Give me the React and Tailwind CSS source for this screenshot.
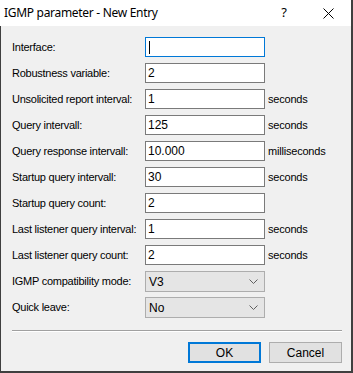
import React from "react";

const rows = [
  { label: "Interface:", value: "", unit: "", focus: true },
  { label: "Robustness variable:", value: "2", unit: "" },
  { label: "Unsolicited report interval:", value: "1", unit: "seconds" },
  { label: "Query intervall:", value: "125", unit: "seconds" },
  { label: "Query response intervall:", value: "10.000", unit: "milliseconds" },
  { label: "Startup query intervall:", value: "30", unit: "seconds" },
  { label: "Startup query count:", value: "2", unit: "" },
  { label: "Last listener query interval:", value: "1", unit: "seconds" },
  { label: "Last listener query count:", value: "2", unit: "seconds" },
];

const selects = [
  { label: "IGMP compatibility mode:", value: "V3" },
  { label: "Quick leave:", value: "No" },
];

function Chevron() {
  return (
    <svg width="9" height="6" viewBox="0 0 9 6" className="shrink-0">
      <path d="M0.5 0.5 L4.5 4.5 L8.5 0.5" fill="none" stroke="#606060" strokeWidth="1" />
    </svg>
  );
}

export default function App() {
  return (
    <div
      className="w-[353px] h-[373px] bg-[#f0f0f0] flex flex-col border-l border-r-2 border-b-2 border-[#3f3f3f] text-black"
      style={{ fontFamily: '"Liberation Sans", Arial, sans-serif' }}
    >
      <div className="h-[26px] bg-white flex items-center shrink-0 -ml-px">
        <div
          className="pl-[4px] text-[12px] flex-1 tracking-[-0.3px]"
          style={{ fontFamily: '"Noto Sans", "Open Sans", sans-serif' }}
        >
          IGMP parameter - New Entry
        </div>
        <div
          className="w-[46px] text-center text-[13px] mr-[-2px]"
          style={{ fontFamily: '"Noto Sans", sans-serif' }}
        >
          ?
        </div>
        <div className="w-[46px] flex justify-center">
          <svg width="11" height="11" viewBox="0 0 11 11">
            <path d="M0.5 0.5 L10.5 10.5 M10.5 0.5 L0.5 10.5" stroke="#000" strokeWidth="1" />
          </svg>
        </div>
      </div>

      <div className="flex flex-col pt-[11px] pl-[11px] gap-[6px] text-[11px]">
        {rows.map((r, i) => (
          <div key={i} className="flex items-center h-[20px]">
            <div className="w-[133px] shrink-0 tracking-[-0.25px]">{r.label}</div>
            <div
              className={`w-[120px] h-[20px] bg-white border flex items-center pl-[2px] text-[12px] ${
                r.focus ? "border-[#0078d7]" : "border-[#7a7a7a]"
              }`}
            >
              {r.focus ? <div className="w-px h-[13px] bg-black ml-[1px]" /> : r.value}
            </div>
            {r.unit && <div className="pl-[3px] tracking-[-0.2px]">{r.unit}</div>}
          </div>
        ))}
      </div>

      <div className="flex flex-col pt-[6px] pl-[11px] gap-[5px] text-[11px]">
        {selects.map((s, i) => (
          <div key={i} className="flex items-center h-[21px]">
            <div className="w-[133px] shrink-0 tracking-[-0.25px]">{s.label}</div>
            <div className="w-[120px] h-[21px] bg-[#e5e5e5] border border-[#adadad] flex items-center pl-[3px] pr-[6px] text-[12px]">
              <span className="flex-1">{s.value}</span>
              <Chevron />
            </div>
          </div>
        ))}
      </div>

      <div className="mt-[12px] ml-[11px] mr-[9px] border-t border-[#a0a0a0] border-b border-b-white" />

      <div className="flex justify-end gap-[8px] mt-[10px] mr-[9px] text-[12px]">
        <div className="w-[73px] h-[21px] bg-[#e1e1e1] border-2 border-[#0078d7] flex items-center justify-center">
          OK
        </div>
        <div className="w-[73px] h-[21px] bg-[#e1e1e1] border border-[#adadad] flex items-center justify-center">
          Cancel
        </div>
      </div>
    </div>
  );
}
